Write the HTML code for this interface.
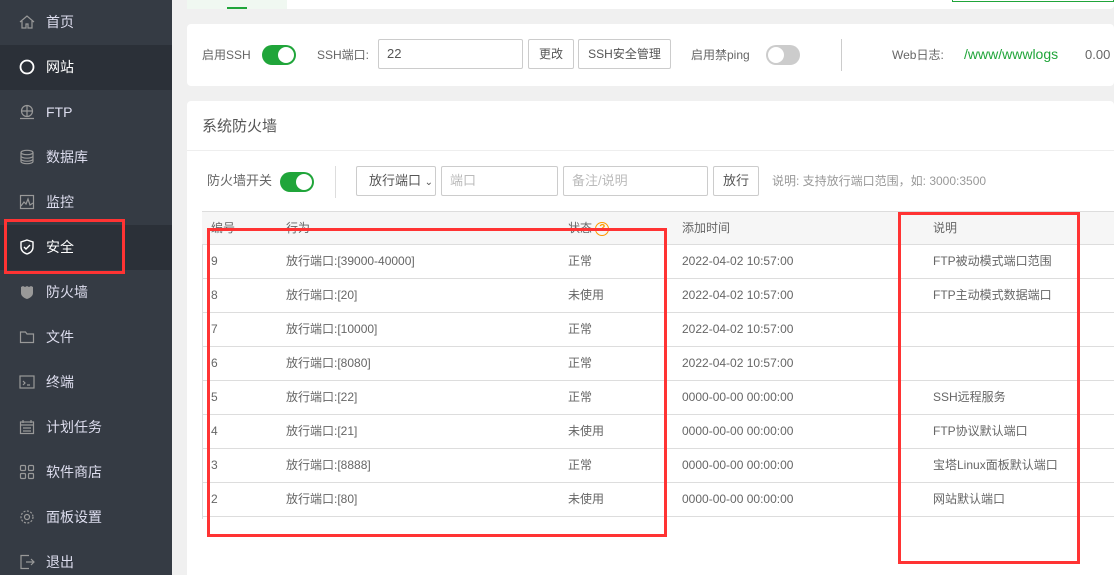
<!DOCTYPE html>
<html><head><meta charset="utf-8"><style>
*{margin:0;padding:0;box-sizing:border-box}
html,body{width:1114px;height:575px;overflow:hidden}
body{background:#f0f0f0;font-family:"Liberation Sans","Noto Sans CJK SC",sans-serif;position:relative;color:#555}
.side{position:absolute;left:0;top:0;width:172px;height:575px;background:#353b44}
.mi{position:absolute;left:0;width:172px;height:45px;color:#dde;font-size:14px;line-height:45px;padding-left:46px}
.mi.act{background:#2b3038;color:#fff}
.ic{position:absolute;left:19px;top:14px;width:16px;height:16px}
.card{position:absolute;background:#fff;border-radius:4px}
.abs{position:absolute}
.tog{position:absolute;width:34px;height:20px;border-radius:10px;background:#20a53a}
.tog::after{content:"";position:absolute;right:2px;top:2px;width:16px;height:16px;border-radius:50%;background:#fff}
.tog.off{background:#ccc}.tog.off::after{right:auto;left:2px}
.inp{position:absolute;border:1px solid #ccc;border-radius:2px;height:30px;font-size:12px;line-height:28px;padding-left:8px;color:#bbb;background:#fff}
.btn{position:absolute;border:1px solid #ccc;border-radius:2px;height:30px;font-size:12px;line-height:28px;text-align:center;color:#555;background:#fff;white-space:nowrap}
.t{position:absolute;font-size:12px;color:#666;height:20px;line-height:20px;white-space:nowrap}
.row{position:absolute;left:202px;width:912px;height:34px;border-bottom:1px solid #ddd;font-size:12px;color:#666}
.row span{position:absolute;top:0;height:33px;line-height:33px;white-space:nowrap}
.rb{position:absolute;border:3px solid #f33}
</style></head><body>
<div class="side">
<div class="mi" style="top:0">首页<svg class="ic" viewBox="0 0 16 16" fill="none" stroke="#999" stroke-width="1.2"><path d="M1 8L8 2l7 6M3 7v7h4v-4h2v4h4V7"/></svg></div>
<div class="mi act" style="top:45px">网站<svg class="ic" viewBox="0 0 16 16" fill="none" stroke="#fff" stroke-width="1.8"><circle cx="8" cy="8" r="6.5"/></svg></div>
<div class="mi" style="top:90px">FTP<svg class="ic" viewBox="0 0 16 16" fill="none" stroke="#999" stroke-width="1.2"><circle cx="8" cy="7" r="5.5"/><path d="M2.5 7h11M8 1.5v11M1 14.5h14"/></svg></div>
<div class="mi" style="top:135px">数据库<svg class="ic" viewBox="0 0 16 16" fill="none" stroke="#999" stroke-width="1.2"><ellipse cx="8" cy="3.5" rx="6" ry="2.2"/><path d="M2 3.5v9c0 1.2 2.7 2.2 6 2.2s6-1 6-2.2v-9M2 7c0 1.2 2.7 2.2 6 2.2S14 8.2 14 7M2 10c0 1.2 2.7 2.2 6 2.2s6-1 6-2.2"/></svg></div>
<div class="mi" style="top:180px">监控<svg class="ic" viewBox="0 0 16 16" fill="none" stroke="#999" stroke-width="1.2"><rect x="1.5" y="1.5" width="13" height="13"/><path d="M2 12l3-4 2 2 2-5 2 6 3-2"/></svg></div>
<div class="mi act" style="top:225px">安全<svg class="ic" viewBox="0 0 16 16" fill="none" stroke="#fff" stroke-width="1.4"><path d="M8 1l6 2v5c0 4-3 6-6 7-3-1-6-3-6-7V3z"/><path d="M5 8l2 2 4-4"/></svg></div>
<div class="mi" style="top:270px">防火墙<svg class="ic" viewBox="0 0 16 16" fill="#999"><path d="M2 3l2-1 2 1 2-1 2 1 2-1 2 1v6c0 3-3 5-6 6-3-1-6-3-6-6z"/></svg></div>
<div class="mi" style="top:315px">文件<svg class="ic" viewBox="0 0 16 16" fill="none" stroke="#999" stroke-width="1.2"><path d="M1.5 3h5l1.5 2h6.5v8.5h-13z"/></svg></div>
<div class="mi" style="top:360px">终端<svg class="ic" viewBox="0 0 16 16" fill="none" stroke="#999" stroke-width="1.2"><rect x="1" y="2" width="14" height="12"/><path d="M4 7l2 2-2 2M8 11h3"/></svg></div>
<div class="mi" style="top:405px">计划任务<svg class="ic" viewBox="0 0 16 16" fill="none" stroke="#999" stroke-width="1.2"><rect x="1.5" y="3" width="13" height="11.5"/><path d="M4 1v3M12 1v3M1.5 6h13M4 9h8M4 12h8"/></svg></div>
<div class="mi" style="top:450px">软件商店<svg class="ic" viewBox="0 0 16 16" fill="none" stroke="#999" stroke-width="1.2"><rect x="1.5" y="1.5" width="5" height="5" rx="1"/><rect x="9.5" y="1.5" width="5" height="5" rx="1"/><rect x="1.5" y="9.5" width="5" height="5" rx="1"/><rect x="9.5" y="9.5" width="5" height="5" rx="1"/></svg></div>
<div class="mi" style="top:495px">面板设置<svg class="ic" viewBox="0 0 16 16" fill="none" stroke="#999" stroke-width="1.2"><circle cx="8" cy="8" r="2.5"/><circle cx="8" cy="8" r="6" stroke-dasharray="2 1.5"/></svg></div>
<div class="mi" style="top:540px">退出<svg class="ic" viewBox="0 0 16 16" fill="none" stroke="#999" stroke-width="1.2"><path d="M10 1.5H2v13h8M7 8h8M12 5l3 3-3 3"/></svg></div>
</div>
<div class="rb" style="left:4px;top:219px;width:121px;height:55px"></div>

<div class="card" style="left:187px;top:-4px;width:927px;height:13px"></div>
<div class="abs" style="left:187px;top:0;width:100px;height:9px;background:#f0f8f1"></div>
<div class="abs" style="left:227px;top:7px;width:20px;height:2px;background:#20a53a"></div>
<div class="abs" style="left:952px;top:0;width:162px;height:2px;border:1px solid #20a53a;border-top:none"></div>

<div class="card" style="left:187px;top:24px;width:927px;height:62px"></div>
<div class="t" style="left:202px;top:45px">启用SSH</div>
<div class="tog" style="left:262px;top:45px"></div>
<div class="t" style="left:317px;top:45px">SSH端口:</div>
<div class="inp" style="left:378px;top:39px;width:145px;color:#555;font-size:13px">22</div>
<div class="btn" style="left:528px;top:39px;width:46px">更改</div>
<div class="btn" style="left:578px;top:39px;width:93px">SSH安全管理</div>
<div class="t" style="left:691px;top:45px">启用禁ping</div>
<div class="tog off" style="left:766px;top:45px"></div>
<div class="abs" style="left:841px;top:39px;width:1px;height:32px;background:#ccc"></div>
<div class="t" style="left:892px;top:45px">Web日志:</div>
<div class="t" style="left:964px;top:44px;font-size:14px;color:#20a53a">/www/wwwlogs</div>
<div class="t" style="left:1085px;top:45px;font-size:13px">0.00</div>

<div class="card" style="left:187px;top:101px;width:927px;height:480px"></div>
<div class="t" style="left:202px;top:116px;font-size:15px;height:22px;line-height:22px;color:#555">系统防火墙</div>
<div class="abs" style="left:187px;top:150px;width:927px;height:1px;background:#eee"></div>
<div class="t" style="left:207px;top:171px;font-size:13px">防火墙开关</div>
<div class="tog" style="left:280px;top:172px"></div>
<div class="abs" style="left:335px;top:166px;width:1px;height:32px;background:#ddd"></div>
<div class="btn" style="left:356px;top:166px;width:80px;font-size:13px;text-align:left;padding-left:12px">放行端口 <span style="font-size:10px">&#x2304;</span></div>
<div class="inp" style="left:441px;top:166px;width:117px;font-size:13px">端口</div>
<div class="inp" style="left:563px;top:166px;width:145px;font-size:13px">备注/说明</div>
<div class="btn" style="left:713px;top:166px;width:46px;font-size:13px">放行</div>
<div class="t" style="left:772px;top:171px;color:#999">说明: 支持放行端口范围，如: 3000:3500</div>

<div class="abs" style="left:202px;top:211px;width:912px;height:308px;border-left:1px solid #ddd"></div>
<div class="row" style="top:211px;background:#f6f6f6;border-top:1px solid #ddd;height:34px"><span style="left:9px">编号</span><span style="left:84px">行为</span><span style="left:366px">状态 <b style="display:inline-block;width:14px;height:14px;border:1.5px solid #f90;border-radius:50%;color:#f90;font-size:10px;text-align:center;line-height:11px;vertical-align:middle">?</b></span><span style="left:480px">添加时间</span><span style="left:731px">说明</span></div>
<div class="row" style="top:245px"><span style="left:9px">9</span><span style="left:84px">放行端口:[39000-40000]</span><span style="left:366px">正常</span><span style="left:480px">2022-04-02 10:57:00</span><span style="left:731px">FTP被动模式端口范围</span></div>
<div class="row" style="top:279px"><span style="left:9px">8</span><span style="left:84px">放行端口:[20]</span><span style="left:366px">未使用</span><span style="left:480px">2022-04-02 10:57:00</span><span style="left:731px">FTP主动模式数据端口</span></div>
<div class="row" style="top:313px"><span style="left:9px">7</span><span style="left:84px">放行端口:[10000]</span><span style="left:366px">正常</span><span style="left:480px">2022-04-02 10:57:00</span></div>
<div class="row" style="top:347px"><span style="left:9px">6</span><span style="left:84px">放行端口:[8080]</span><span style="left:366px">正常</span><span style="left:480px">2022-04-02 10:57:00</span></div>
<div class="row" style="top:381px"><span style="left:9px">5</span><span style="left:84px">放行端口:[22]</span><span style="left:366px">正常</span><span style="left:480px">0000-00-00 00:00:00</span><span style="left:731px">SSH远程服务</span></div>
<div class="row" style="top:415px"><span style="left:9px">4</span><span style="left:84px">放行端口:[21]</span><span style="left:366px">未使用</span><span style="left:480px">0000-00-00 00:00:00</span><span style="left:731px">FTP协议默认端口</span></div>
<div class="row" style="top:449px"><span style="left:9px">3</span><span style="left:84px">放行端口:[8888]</span><span style="left:366px">正常</span><span style="left:480px">0000-00-00 00:00:00</span><span style="left:731px">宝塔Linux面板默认端口</span></div>
<div class="row" style="top:483px"><span style="left:9px">2</span><span style="left:84px">放行端口:[80]</span><span style="left:366px">未使用</span><span style="left:480px">0000-00-00 00:00:00</span><span style="left:731px">网站默认端口</span></div>

<div class="rb" style="left:207px;top:228px;width:460px;height:309px"></div>
<div class="rb" style="left:898px;top:212px;width:182px;height:352px"></div>
</body></html>
